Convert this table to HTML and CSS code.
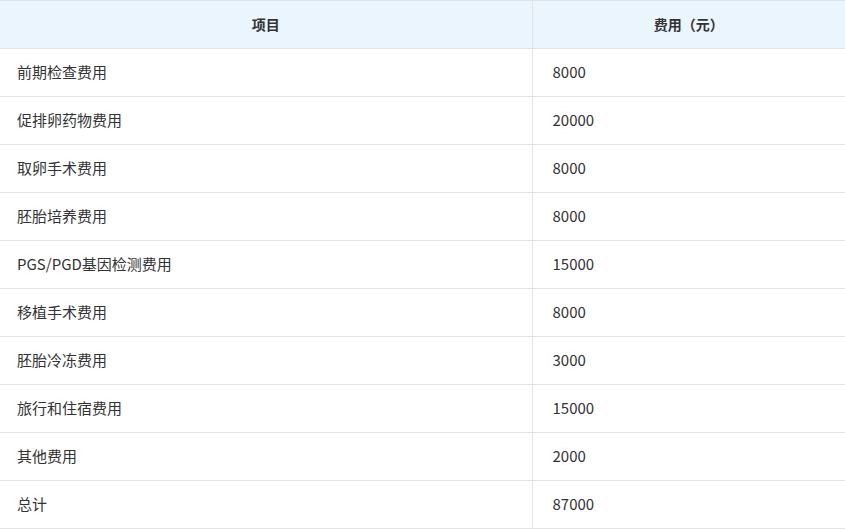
FILE: index.html
```html
<!DOCTYPE html>
<html lang="zh">
<head>
<meta charset="utf-8">
<title>费用表</title>
<link rel="stylesheet" href="styles.css">
</head>
<body>
<table class="cost-table">
  <thead>
    <tr><th class="col-item">项目</th><th class="col-cost">费用（元）</th></tr>
  </thead>
  <tbody>
    <tr><td>前期检查费用</td><td>8000</td></tr>
    <tr><td>促排卵药物费用</td><td>20000</td></tr>
    <tr><td>取卵手术费用</td><td>8000</td></tr>
    <tr><td>胚胎培养费用</td><td>8000</td></tr>
    <tr><td>PGS/PGD基因检测费用</td><td>15000</td></tr>
    <tr><td>移植手术费用</td><td>8000</td></tr>
    <tr><td>胚胎冷冻费用</td><td>3000</td></tr>
    <tr><td>旅行和住宿费用</td><td>15000</td></tr>
    <tr><td>其他费用</td><td>2000</td></tr>
    <tr><td>总计</td><td>87000</td></tr>
  </tbody>
</table>
</body>
</html>
```
FILE: styles.css
```css
html, body {
  margin: 0;
  padding: 0;
  background: #ffffff;
}
body {
  font-family: "Noto Sans CJK SC", "Noto Sans", sans-serif;
  font-size: 15px;
  color: #333333;
}
.cost-table {
  width: 845px;
  border-collapse: collapse;
  table-layout: fixed;
}
.cost-table th,
.cost-table td {
  height: 48px;
  padding: 0 0 2px 0;
  border-top: 1px solid #e3e3e3;
  border-bottom: 1px solid #e3e3e3;
  vertical-align: middle;
  box-sizing: border-box;
}
.cost-table th {
  background: #eaf5fe;
  font-weight: bold;
  font-size: 14px;
  text-align: center;
  color: #333333;
}
.col-item { width: 532px; }
.cost-table th + th,
.cost-table td + td {
  border-left: 1px solid #e3e3e3;
}
.cost-table td {
  text-align: left;
  padding-left: 17px;
}
.cost-table td + td {
  padding-left: 20px;
}
```
